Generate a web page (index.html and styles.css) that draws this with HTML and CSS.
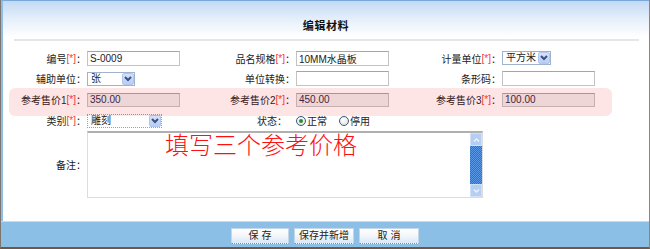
FILE: index.html
```html
<!DOCTYPE html>
<html lang="zh">
<head>
<meta charset="utf-8">
<title>编辑材料</title>
<link rel="stylesheet" href="styles.css">
</head>
<body>
<div class="frame">
  <div class="panel">
    <div class="header"><h1 class="title">编辑材料</h1></div>
    <div class="rule"></div>
    <div class="form">
      <label class="lbl">编号<span class="req">[*]</span>：</label>
      <div class="cell"><input class="txt" type="text" value="S-0009"></div>
      <label class="lbl">品名规格<span class="req">[*]</span>：</label>
      <div class="cell"><input class="txt" type="text" value="10MM水晶板"></div>
      <label class="lbl">计量单位<span class="req">[*]</span>：</label>
      <div class="cell"><div class="select w49"><span class="val">平方米</span><span class="btn"><svg width="8" height="6" viewBox="0 0 8 6"><polyline points="1,1 4,4 7,1" fill="none" stroke="#3d5179" stroke-width="2"/></svg></span></div></div>

      <label class="lbl">辅助单位：</label>
      <div class="cell"><div class="select w48"><span class="val">张</span><span class="btn"><svg width="8" height="6" viewBox="0 0 8 6"><polyline points="1,1 4,4 7,1" fill="none" stroke="#3d5179" stroke-width="2"/></svg></span></div></div>
      <label class="lbl">单位转换：</label>
      <div class="cell"><input class="txt" type="text" value=""></div>
      <label class="lbl">条形码：</label>
      <div class="cell"><input class="txt" type="text" value=""></div>

      <label class="lbl">参考售价1<span class="req">[*]</span>：</label>
      <div class="cell"><input class="txt grey" type="text" value="350.00"></div>
      <label class="lbl">参考售价2<span class="req">[*]</span>：</label>
      <div class="cell"><input class="txt grey" type="text" value="450.00"></div>
      <label class="lbl">参考售价3<span class="req">[*]</span>：</label>
      <div class="cell"><input class="txt grey" type="text" value="100.00"></div>

      <label class="lbl">类别<span class="req">[*]</span>：</label>
      <div class="cell"><div class="select w75 dotted"><span class="val">雕刻</span><span class="btn"><svg width="8" height="6" viewBox="0 0 8 6"><polyline points="1,1 4,4 7,1" fill="none" stroke="#3d5179" stroke-width="2"/></svg></span></div></div>
      <label class="lbl lbl-status">状态：</label>
      <div class="cell radios span3">
        <span class="radio checked"></span><span class="rtext">正常</span>
        <span class="radio"></span><span class="rtext">停用</span>
      </div>

      <label class="lbl">备注：</label>
      <div class="cell span5">
        <div class="textarea">
          <div class="ta-body"></div>
          <div class="scrollbar">
            <div class="sb-btn"><svg width="7" height="4" viewBox="0 0 7 4"><polyline points="1,3.5 3.5,1 6,3.5" fill="none" stroke="#eaf2fd" stroke-width="1.4"/></svg></div>
            <div class="sb-thumb"></div>
            <div class="sb-btn"><svg width="7" height="4" viewBox="0 0 7 4"><polyline points="1,0.5 3.5,3 6,0.5" fill="none" stroke="#eaf2fd" stroke-width="1.4"/></svg></div>
          </div>
        </div>
      </div>
    </div>
  </div>
  <div class="footer">
    <button class="fbtn b1" type="button">保 存</button>
    <button class="fbtn b2" type="button">保存并新增</button>
    <button class="fbtn b3" type="button">取 消</button>
  </div>
  <div class="band"></div>
  <div class="note">填写三个参考价格</div>
</div>
</body>
</html>
```

FILE: styles.css
```css
* { box-sizing: border-box; }
html, body { margin: 0; padding: 0; background: #fff; }
body {
  font-family: "Liberation Sans", "Noto Sans CJK SC", sans-serif;
  font-size: 10px;
  color: #222;
}
.frame {
  position: relative;
  width: 650px;
  height: 249px;
  border-left: 1px solid #7d7470;
  border-right: 1px solid #8a8585;
  border-bottom: 2px solid #735644;
  background: #8bbfe5;
  display: flex;
  flex-direction: column;
}
.panel {
  height: 221px;
  background: #fff;
  border-top: 1px solid #7aa8d8;
  border-left: 2px solid #8bbfe5;
  display: flex;
  flex-direction: column;
}
.header {
  height: 38px;
  background: linear-gradient(#c3daf3 0%, #e3eefa 45%, #ffffff 95%);
  display: flex;
  justify-content: center;
  padding-top: 18px;
}
.title {
  margin: 0;
  font-size: 11px;
  line-height: 14px;
  font-weight: bold;
  color: #111;
  letter-spacing: 0.6px;
}
.rule {
  height: 2px;
  background: #e6e6e6;
  margin: 0 10px 0 11px;
}
.form {
  display: grid;
  grid-template-columns: 83px 114px 95px 115px 91px 1fr;
  grid-template-rows: 20px 21px 21px 21px 67px;
  padding-top: 7px;
}
.lbl {
  display: flex;
  align-items: center;
  justify-content: flex-end;
  white-space: nowrap;
  padding-right: 0;
  color: #222;
}
.lbl-status { padding-right: 8px; }
.req { color: #f23c3c; }
.cell {
  display: flex;
  align-items: center;
  padding-left: 1px;
}
.span3 { grid-column: span 3; }
.span5 { grid-column: span 5; align-items: stretch; }
.txt {
  width: 93px;
  height: 15px;
  padding: 0 2px;
  margin: 0;
  font: inherit;
  font-size: 10px;
  color: #222;
  border: 1px solid #c3c3c3;
  border-top-color: #a5a5a5;
  background: #fff;
  outline: none;
}
.txt.grey { background: #efefef; height: 14px; color: #2a2a4a; }
.select {
  height: 14px;
  border: 1px solid #9fb4cc;
  background: #fff;
  display: flex;
  align-items: stretch;
}
.select.dotted { border: 1px dotted #8ca4c4; }
.w48 { width: 48px; }
.w49 { width: 49px; }
.w75 { width: 75px; }
.val {
  flex: 1;
  padding-left: 3px;
  display: flex;
  align-items: center;
  line-height: 1;
}
.btn {
  width: 12px;
  margin: 0;
  background: linear-gradient(#d4e1fc, #b9cdf8);
  border: 1px solid #b3c7ee;
  border-radius: 2px;
  display: flex;
  align-items: center;
  justify-content: center;
}
.radios { gap: 0; }
.radio {
  width: 10px;
  height: 10px;
  border-radius: 50%;
  border: 1px solid #355a86;
  background: radial-gradient(circle at 40% 35%, #fff 0%, #e6e6e0 70%, #cfd2d6 100%);
  display: inline-flex;
  align-items: center;
  justify-content: center;
  margin-right: 1px;
}
.radio.checked::after {
  content: "";
  width: 4px;
  height: 4px;
  border-radius: 50%;
  background: #2f8a35;
}
.rtext { margin-right: 12px; }
.textarea {
  width: 396px;
  height: 67px;
  border: 1px solid #dcdcdc;
  border-top: 2px solid #b0b0b0;
  display: flex;
  background: #fff;
}
.ta-body { flex: 1; }
.scrollbar {
  width: 12px;
  display: flex;
  flex-direction: column;
  background: #dbe8f9;
}
.sb-btn {
  height: 13px;
  background: #b5cff3;
  border: 1px solid #cfe0f8;
  display: flex;
  align-items: center;
  justify-content: center;
}
.sb-thumb {
  flex: 1;
  background-color: #3f82d9;
  background-image: repeating-conic-gradient(#2f6fd0 0 25%, #5a98e6 0 50%);
  background-size: 2px 2px;
}
.footer {
  flex: 1;
  border-top: 1px solid #c2dcf2;
  display: flex;
  justify-content: center;
  align-items: flex-start;
  padding-top: 6px;
  gap: 5px;
}
.fbtn {
  height: 16px;
  padding: 0;
  margin: 0;
  font: inherit;
  font-size: 10px;
  color: #222;
  background: linear-gradient(#ffffff, #f2f6fb 50%, #dbe7f4);
  border: 1px solid #c4d6e9;
  border-bottom: 1px dotted #6f90b8;
  line-height: 14px;
}
.b1 { width: 58px; }
.b2 { width: 60px; }
.b3 { width: 60px; }
.band {
  position: absolute;
  left: 8px;
  top: 88px;
  width: 603px;
  height: 28px;
  border-radius: 6px;
  background: rgba(250, 0, 0, 0.1);
  pointer-events: none;
}
.note {
  position: absolute;
  left: 164px;
  top: 131px;
  font-family: "Noto Sans CJK SC", sans-serif;
  font-size: 24px;
  font-weight: 300;
  line-height: 26px;
  color: #ff1010;
  white-space: nowrap;
  pointer-events: none;
}
```
